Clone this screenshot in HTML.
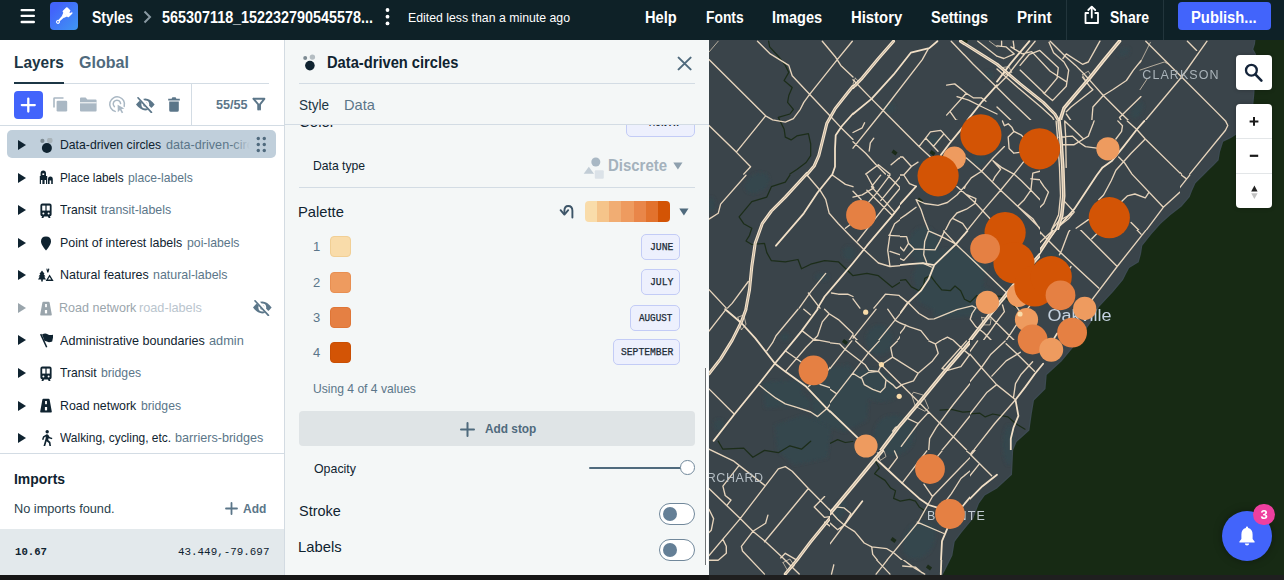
<!DOCTYPE html>
<html lang="en">
<head>
<meta charset="utf-8">
<title>Styles</title>
<style>
*{box-sizing:border-box;margin:0;padding:0}
html,body{width:1284px;height:580px;overflow:hidden;background:#161616}
body{font-family:"Liberation Sans",sans-serif;color:#0f2330;position:relative;-webkit-font-smoothing:antialiased}
.abs,.t{position:absolute;white-space:nowrap}
.t{line-height:1;transform-origin:0 50%}
.b{font-weight:700}
.mono{font-family:"Liberation Mono",monospace}
/* top bar */
#top{position:absolute;left:0;top:0;width:1284px;height:40.5px;background:#0e2127;color:#fff}
#top .t{color:#fff}
/* left panel */
#left{position:absolute;left:0;top:40px;width:284px;height:534.5px;background:#fff;overflow:hidden}
#mid{position:absolute;left:284px;top:40px;width:425px;height:534.5px;background:#f4f7f7;border-left:1px solid #d3dbe2;overflow:hidden}
#map{position:absolute;left:709px;top:40px;width:575px;height:540px;background:#3a444a;overflow:hidden}
.hl{position:absolute;height:1px;background:#d3dce4}
.vl{position:absolute;width:1px;background:#d3dce4}
.g{color:#5b7689}
.row .t{font-size:13px}
.tri{position:absolute;width:0;height:0;margin-top:-0.6px;border-left:8.8px solid #0f2330;border-top:5.3px solid transparent;border-bottom:5.3px solid transparent}
.chip{position:absolute;background:#edf0fd;border:1px solid #c3ccf6;border-radius:5px;height:26px}
.chip .t{font-size:10px;color:#1c2b36;top:8px;font-weight:400;-webkit-text-stroke:0.25px #1c2b36}
.sw{position:absolute;width:21px;height:21px;border-radius:4px}
.num{font-size:13px;color:#5b7689}
.tog{position:absolute;width:36px;height:22px;border:1px solid #71889b;border-radius:11px;background:#fff}
.tog i{position:absolute;left:3px;top:3px;width:14px;height:14px;border-radius:50%;background:#647f96}
</style>
</head>
<body>
<!-- ================= TOP BAR ================= -->
<div id="top">
  <svg class="abs" style="left:20.1px;top:8.8px" width="16" height="16" viewBox="0 0 16 16"><g fill="#fff"><rect x="0.5" y="0.1" width="14.5" height="2.2" rx="1.1"/><rect x="0.5" y="5.8" width="14.5" height="2.2" rx="1.1"/><rect x="0.5" y="11.7" width="14.5" height="2.6" rx="1.2"/></g></svg>
  <div class="abs" id="logo" style="left:50px;top:2px;width:28px;height:28px;border-radius:4px;background:linear-gradient(135deg,#4264fb 20%,#3f97f2 100%)">
    <svg width="28" height="28" viewBox="0 0 28 28"><g transform="translate(13.1 14.7) rotate(45)" fill="#fff"><rect x="-4.3" y="-9.6" width="8.6" height="6.6" rx="1"/><path d="M-2.9 -3.4 H2.9 L1.3 0.4 H-1.3 Z"/><path d="M-1.3 0 H1.3 L0.9 6 H-0.9 Z"/><circle cx="0" cy="7.2" r="2"/><circle cx="0" cy="7.3" r="0.85" fill="#4273f8"/><path d="M0.8 -9.8 L1.7 -7.2 L2.7 -8.2 L3 -9.8 Z" fill="#4169fa"/></g></svg>
  </div>
  <div class="t b" id="t-styles" style="left:92.00px;top:9.6px;font-size:16px;transform:scaleX(0.8726)">Styles</div>
  <svg class="abs" style="left:143px;top:10px" width="9" height="14" viewBox="0 0 9 14"><path d="M1.5 1.5 L7 7 L1.5 12.5" fill="none" stroke="#8a9aa3" stroke-width="2"/></svg>
  <div class="t b" id="t-name" style="left:162.00px;top:9.6px;font-size:16px;transform:scaleX(0.8979)">565307118_152232790545578...</div>
  <svg class="abs" style="left:384px;top:7px" width="7" height="20" viewBox="0 0 7 20"><g fill="#fff"><circle cx="3.5" cy="3" r="1.9"/><circle cx="3.5" cy="9.7" r="1.9"/><circle cx="3.5" cy="16.4" r="1.9"/></g></svg>
  <div class="t" id="t-edited" style="left:408.00px;top:10.6px;font-size:13px;transform:scaleX(0.9458)">Edited less than a minute ago</div>
  <div class="t b" id="t-help" style="left:645.00px;top:9.6px;font-size:16px;transform:scaleX(0.9147)">Help</div>
  <div class="t b" id="t-fonts" style="left:706.00px;top:9.6px;font-size:16px;transform:scaleX(0.8639)">Fonts</div>
  <div class="t b" id="t-images" style="left:772.00px;top:9.6px;font-size:16px;transform:scaleX(0.9091)">Images</div>
  <div class="t b" id="t-history" style="left:851.00px;top:9.6px;font-size:16px;transform:scaleX(0.9287)">History</div>
  <div class="t b" id="t-settings" style="left:931.00px;top:9.6px;font-size:16px;transform:scaleX(0.9048)">Settings</div>
  <div class="t b" id="t-print" style="left:1017.00px;top:9.6px;font-size:16px;transform:scaleX(0.9459)">Print</div>
  <div class="vl" style="left:1066px;top:0;height:40px;background:#22353c"></div>
  <svg class="abs" style="left:1083px;top:5px" width="18" height="20" viewBox="0 0 18 20"><g fill="none" stroke="#fff" stroke-width="1.8" stroke-linecap="round" stroke-linejoin="round"><path d="M5.2 8 H2.5 V18 H15 V8 H12.3"/><path d="M8.75 12.5 V2"/><path d="M5.3 5 L8.75 1.6 L12.2 5"/></g></svg>
  <div class="t b" id="t-share" style="left:1109.61px;top:9.6px;font-size:16px;transform:scaleX(0.8758)">Share</div>
  <div class="vl" style="left:1163px;top:0;height:40px;background:#22353c"></div>
  <div class="abs" style="left:1178px;top:2px;width:93px;height:28px;border-radius:4px;background:#4264fb"></div>
  <div class="t b" id="t-publish" style="left:1191.46px;top:9.6px;font-size:16px;transform:scaleX(0.9232)">Publish...</div>
</div>

<!-- ================= LEFT PANEL ================= -->
<div id="left">
  <div class="t b" id="t-layers" style="left:14.08px;top:14px;font-size:17px;color:#1c3645;transform:scaleX(0.9076)">Layers</div>
  <div class="t b" id="t-global" style="left:79.00px;top:14px;font-size:17px;color:#4f6a7d;transform:scaleX(0.9425)">Global</div>
  <div class="hl" style="left:14px;top:43px;width:255px"></div>
  <div class="hl" style="left:14px;top:42px;width:50px;height:2px;background:#1c3645"></div>
  <div class="abs" style="left:14px;top:51px;width:29px;height:28px;border-radius:4px;background:#4264fb"></div>

  <svg class="abs" style="left:14px;top:51px" width="29" height="28" viewBox="0 0 29 28"><path d="M14.3 7.6 V20.6 M7.8 14.1 H20.8" stroke="#fff" stroke-width="2.3" stroke-linecap="round"/></svg>
  <svg class="abs" style="left:52px;top:56px" width="17" height="17" viewBox="0 0 17 17"><path d="M2 11.5 V2.6 Q2 2 2.6 2 H11.5" fill="none" stroke="#aab8c4" stroke-width="1.6"/><rect x="4.6" y="4.8" width="10.6" height="10.6" rx="1.2" fill="#aab8c4"/></svg>
  <svg class="abs" style="left:79px;top:56px" width="19" height="17" viewBox="0 0 19 17"><path d="M1 2.6 Q1 1.6 2 1.6 H6.6 L8.4 3.6 H16.6 Q17.6 3.6 17.6 4.6 V14.4 Q17.6 15.4 16.6 15.4 H2 Q1 15.4 1 14.4 Z" fill="#aab8c4"/><rect x="1" y="6.3" width="16.6" height="1" fill="#fff"/></svg>
  <svg class="abs" style="left:108px;top:55px" width="20" height="20" viewBox="0 0 20 20"><g fill="none" stroke="#aab8c4" stroke-width="1.5" stroke-linecap="round"><path d="M7.2 16.4 A7.4 7.4 0 1 1 16.2 11.4"/><path d="M6.4 11.6 A3.7 3.7 0 1 1 12.6 8.6"/></g><path d="M9.6 9.8 L16.4 13.4 L13.4 14.2 L15.2 17.4 L13.8 18.2 L12 15 L9.8 17.2 Z" fill="#aab8c4"/></svg>
  <svg class="abs" style="left:135px;top:56px" width="21" height="17" viewBox="0 0 21 17"><path d="M1 8.6 Q5.5 2.6 10.4 2.6 Q15.3 2.6 19.6 8.6 Q15.3 14.4 10.4 14.4 Q5.5 14.4 1 8.6 Z" fill="#5b7689"/><circle cx="10.3" cy="8.5" r="3.9" fill="#fff"/><circle cx="10.3" cy="8.5" r="2.2" fill="#5b7689"/><path d="M3.6 0.6 L17.4 16" stroke="#fff" stroke-width="3.6"/><path d="M3 1.8 L16.4 16.4" stroke="#5b7689" stroke-width="1.7" stroke-linecap="round"/></svg>
  <svg class="abs" style="left:167px;top:56px" width="14" height="17" viewBox="0 0 14 17"><path d="M1.2 2.8 H4.6 L5.4 1.2 H8.6 L9.4 2.8 H12.8 V4.6 H1.2 Z M2.2 5.6 H11.8 V14.2 Q11.8 15.8 10.2 15.8 H3.8 Q2.2 15.8 2.2 14.2 Z" fill="#5b7689"/></svg>
  <svg class="abs" style="left:252px;top:57px" width="14" height="15" viewBox="0 0 14 15"><path d="M1.6 1.8 H12.4 L8 7.4 V12.6" fill="none" stroke="#5b7689" stroke-width="1.9" stroke-linejoin="round" stroke-linecap="round"/><path d="M1.6 1.8 L6.2 7.4 V12.6" fill="none" stroke="#5b7689" stroke-width="1.9" stroke-linejoin="round" stroke-linecap="round"/></svg>
  <div class="vl" style="left:191px;top:44px;height:42px"></div>
  <div class="t b g" id="t-5555" style="left:216.00px;top:58px;font-size:13px;transform:scaleX(0.9701)">55/55</div>
  <div class="hl" style="left:0;top:85px;width:284px"></div>
  <div class="abs" style="left:7px;top:90px;width:269px;height:28px;border-radius:5px;background:#c0cfdb"></div>
  <div class="tri" style="left:18px;top:100.7px;border-left-color:#0f2330"></div>
  <svg class="abs" style="left:39px;top:97.9px" width="14" height="15" viewBox="0 0 14 15"><circle cx="3.4" cy="2.9" r="2.1" fill="#7d8b93"/><circle cx="10.8" cy="2.4" r="2.8" fill="#a9b4ba"/><circle cx="7.9" cy="10" r="5" fill="#0f2330"/></svg>
  <div class="t" id="t-r0a" style="left:60.18px;top:98.2px;font-size:13.5px;color:#0f2330;transform:scaleX(0.9052)">Data-driven circles</div>
  <div class="abs" style="left:164px;top:92px;width:86px;height:24px;overflow:hidden"><div class="t" id="t-r0b" style="left:1.8px;top:6px;font-size:13.5px;color:#5b7689;transform:scaleX(0.935)">data-driven-circles</div></div>
  <div class="tri" style="left:18px;top:133.2px;border-left-color:#0f2330"></div>
  <svg class="abs" style="left:39px;top:130.4px" width="14" height="15" viewBox="0 0 14 15"><path d="M4.3 0.6 Q7 0.6 7 3.6 V6 H8.2 V14 H7 V10 H5.6 V14 H3.4 V10 H2 V14 H0.8 V6 H1.6 V3.6 Q1.6 0.6 4.3 0.6 Z M9 14 V9.4 Q9 6.6 11.4 6.6 Q13.8 6.6 13.8 9.4 V14 H12.2 V10.6 H10.6 V14 Z" fill="#0f2330"/><rect x="3.4" y="3.4" width="1.8" height="1.6" fill="#fff"/></svg>
  <div class="t" id="t-r1a" style="left:60.18px;top:130.7px;font-size:13.5px;color:#0f2330;transform:scaleX(0.8734)">Place labels</div>
  <div class="t" id="t-r1b" style="left:128.00px;top:130.7px;font-size:13.5px;color:#5b7689;transform:scaleX(0.9001)">place-labels</div>
  <div class="tri" style="left:18px;top:165.8px;border-left-color:#0f2330"></div>
  <svg class="abs" style="left:39px;top:163.0px" width="14" height="15" viewBox="0 0 14 15"><path d="M3.4 0.6 H10.6 Q12.6 0.6 12.6 2.6 V11.6 Q12.6 13.4 10.8 13.4 L11.6 15 H9.6 L9 13.6 H5 L4.4 15 H2.4 L3.2 13.4 Q1.4 13.4 1.4 11.6 V2.6 Q1.4 0.6 3.4 0.6 Z" fill="#0f2330"/><rect x="3.2" y="2.6" width="3.2" height="5" fill="#fff"/><rect x="7.6" y="2.6" width="3.2" height="5" fill="#fff"/><circle cx="4.4" cy="10.6" r="1" fill="#fff"/><circle cx="9.6" cy="10.6" r="1" fill="#fff"/></svg>
  <div class="t" id="t-r2a" style="left:60.19px;top:163.3px;font-size:13.5px;color:#0f2330;transform:scaleX(0.8960)">Transit</div>
  <div class="t" id="t-r2b" style="left:101.41px;top:163.3px;font-size:13.5px;color:#5b7689;transform:scaleX(0.9156)">transit-labels</div>
  <div class="tri" style="left:18px;top:198.3px;border-left-color:#0f2330"></div>
  <svg class="abs" style="left:39px;top:195.5px" width="14" height="15" viewBox="0 0 14 15"><path d="M7 0.6 Q12 0.6 12 5.6 Q12 9 7 14.6 Q2 9 2 5.6 Q2 0.6 7 0.6 Z" fill="#0f2330"/></svg>
  <div class="t" id="t-r3a" style="left:60.19px;top:195.9px;font-size:13.5px;color:#0f2330;transform:scaleX(0.9201)">Point of interest labels</div>
  <div class="t" id="t-r3b" style="left:187.18px;top:195.9px;font-size:13.5px;color:#5b7689;transform:scaleX(0.9087)">poi-labels</div>
  <div class="tri" style="left:18px;top:230.9px;border-left-color:#0f2330"></div>
  <svg class="abs" style="left:38px;top:228.1px" width="16" height="15" viewBox="0 0 16 15"><path d="M4 2.4 L6.6 6 H5.6 L7.4 8.6 H6.2 L8 11.4 H4.8 V13.6 H3.2 V11.4 H0 L1.8 8.6 H0.6 L2.4 6 H1.4 Z" fill="#0f2330"/><path d="M11.6 6.6 L15.6 13 H7.6 Z M11.6 9 L10 11.6 H13.2 Z" fill="#0f2330" fill-rule="evenodd"/><path d="M8.4 1 L9 0.2 L9.8 2 L10.6 0.2 L11.4 1 L10.4 4.6 H9.2 Z" fill="#0f2330"/></svg>
  <div class="t" id="t-r4a" style="left:60.18px;top:228.4px;font-size:13.5px;color:#0f2330;transform:scaleX(0.9241)">Natural features</div>
  <div class="t" id="t-r4b" style="left:153.41px;top:228.4px;font-size:13.5px;color:#5b7689;transform:scaleX(0.9192)">natural-labels</div>
  <div class="tri" style="left:18px;top:263.5px;border-left-color:#9aa5ac"></div>
  <svg class="abs" style="left:39px;top:260.7px" width="14" height="15" viewBox="0 0 14 15"><path d="M4.4 0.8 H9.6 Q10.4 0.8 10.6 1.6 L12.8 13.4 Q13 14.4 12 14.4 H2 Q1 14.4 1.2 13.4 L3.4 1.6 Q3.6 0.8 4.4 0.8 Z" fill="#9aa5ac"/><rect x="6.1" y="3" width="1.8" height="3.2" fill="#fff"/><rect x="5.9" y="9" width="2.2" height="3.4" fill="#fff"/></svg>
  <div class="t" id="t-r5a" style="left:59.24px;top:261.0px;font-size:13.5px;color:#9aa5ac;transform:scaleX(0.9285)">Road network</div>
  <div class="t" id="t-r5b" style="left:139.07px;top:261.0px;font-size:13.5px;color:#bac5ce;transform:scaleX(0.9413)">road-labels</div>
  <div class="tri" style="left:18px;top:296.0px;border-left-color:#0f2330"></div>
  <svg class="abs" style="left:39px;top:293.2px" width="14" height="15" viewBox="0 0 14 15"><path d="M1 1.4 L2.4 0.8 L8.4 14 L7 14.6 Z" fill="#0f2330"/><path d="M3 1.6 Q6 -0.4 8.6 1.2 Q11.2 2.8 14.6 1.4 L13.2 8.4 Q10 9.8 8 8.6 Q6.4 7.6 5.6 8 Z" fill="#0f2330"/></svg>
  <div class="t" id="t-r6a" style="left:60.19px;top:293.5px;font-size:13.5px;color:#0f2330;transform:scaleX(0.9318)">Administrative boundaries</div>
  <div class="t" id="t-r6b" style="left:208.81px;top:293.5px;font-size:13.5px;color:#5b7689;transform:scaleX(0.9452)">admin</div>
  <div class="tri" style="left:18px;top:328.5px;border-left-color:#0f2330"></div>
  <svg class="abs" style="left:39px;top:325.7px" width="14" height="15" viewBox="0 0 14 15"><path d="M3.4 0.6 H10.6 Q12.6 0.6 12.6 2.6 V11.6 Q12.6 13.4 10.8 13.4 L11.6 15 H9.6 L9 13.6 H5 L4.4 15 H2.4 L3.2 13.4 Q1.4 13.4 1.4 11.6 V2.6 Q1.4 0.6 3.4 0.6 Z" fill="#0f2330"/><rect x="3.2" y="2.6" width="3.2" height="5" fill="#fff"/><rect x="7.6" y="2.6" width="3.2" height="5" fill="#fff"/><circle cx="4.4" cy="10.6" r="1" fill="#fff"/><circle cx="9.6" cy="10.6" r="1" fill="#fff"/></svg>
  <div class="t" id="t-r7a" style="left:60.19px;top:326.0px;font-size:13.5px;color:#0f2330;transform:scaleX(0.8960)">Transit</div>
  <div class="t" id="t-r7b" style="left:100.83px;top:326.0px;font-size:13.5px;color:#5b7689;transform:scaleX(0.9039)">bridges</div>
  <div class="tri" style="left:18px;top:361.1px;border-left-color:#0f2330"></div>
  <svg class="abs" style="left:39px;top:358.3px" width="14" height="15" viewBox="0 0 14 15"><path d="M4.4 0.8 H9.6 Q10.4 0.8 10.6 1.6 L12.8 13.4 Q13 14.4 12 14.4 H2 Q1 14.4 1.2 13.4 L3.4 1.6 Q3.6 0.8 4.4 0.8 Z" fill="#0f2330"/><rect x="6.1" y="3" width="1.8" height="3.2" fill="#fff"/><rect x="5.9" y="9" width="2.2" height="3.4" fill="#fff"/></svg>
  <div class="t" id="t-r8a" style="left:60.18px;top:358.6px;font-size:13.5px;color:#0f2330;transform:scaleX(0.9151)">Road network</div>
  <div class="t" id="t-r8b" style="left:141.17px;top:358.6px;font-size:13.5px;color:#5b7689;transform:scaleX(0.9039)">bridges</div>
  <div class="tri" style="left:18px;top:393.6px;border-left-color:#0f2330"></div>
  <svg class="abs" style="left:39px;top:389.8px" width="14" height="17" viewBox="0 0 14 17"><circle cx="8.2" cy="1.8" r="1.7" fill="#0f2330"/><path d="M7.6 4.2 Q8.8 4 9.4 5 L10.6 7 L13.4 8 L12.9 9.3 L9.6 8.2 L9.2 10 L11.4 12 L12 16 H10.4 L9.9 12.9 L7.6 11.2 L6.2 16 H4.5 L6.6 8.6 L6.8 6.4 L5.2 7.4 L4.4 10 L3 9.6 L4 6.4 Z" fill="#0f2330"/></svg>
  <div class="t" id="t-r9a" style="left:60.18px;top:391.1px;font-size:13.5px;color:#0f2330;transform:scaleX(0.8851)">Walking, cycling, etc.</div>
  <div class="t" id="t-r9b" style="left:174.82px;top:391.1px;font-size:13.5px;color:#5b7689;transform:scaleX(0.9334)">barriers-bridges</div>
  <div class="abs" style="left:232px;top:91px;width:19px;height:26px;background:linear-gradient(90deg,rgba(192,207,219,0),#c0cfdb 95%)"></div>
  <svg class="abs" style="left:256px;top:96px" width="11" height="17" viewBox="0 0 11 17"><g fill="#4f6a7d"><circle cx="2.3" cy="2.5" r="1.7"/><circle cx="8.3" cy="2.5" r="1.7"/><circle cx="2.3" cy="8.5" r="1.7"/><circle cx="8.3" cy="8.5" r="1.7"/><circle cx="2.3" cy="14.5" r="1.7"/><circle cx="8.3" cy="14.5" r="1.7"/></g></svg>
  <svg class="abs" style="left:252px;top:259px" width="21" height="17" viewBox="0 0 21 17"><path d="M1 8.6 Q5.5 2.6 10.4 2.6 Q15.3 2.6 19.6 8.6 Q15.3 14.4 10.4 14.4 Q5.5 14.4 1 8.6 Z" fill="#5b7689"/><circle cx="10.3" cy="8.5" r="3.9" fill="#fff"/><circle cx="10.3" cy="8.5" r="2.2" fill="#5b7689"/><path d="M3.6 0.6 L17.4 16" stroke="#fff" stroke-width="3.6"/><path d="M3 1.8 L16.4 16.4" stroke="#5b7689" stroke-width="1.7" stroke-linecap="round"/></svg>
  <svg class="abs" style="left:225px;top:462px" width="13" height="13" viewBox="0 0 13 13"><path d="M6.5 1 V12 M1 6.5 H12" stroke="#5b7689" stroke-width="1.8" stroke-linecap="round"/></svg>
  <div class="hl" style="left:0;top:413px;width:284px"></div>
  <div class="t b" id="t-imports" style="left:14.00px;top:431.3px;font-size:15px;transform:scaleX(0.9275)">Imports</div>
  <div class="t" id="t-noimp" style="left:14.00px;top:462px;font-size:13px;color:#2a3f4d;transform:scaleX(0.9804)">No imports found.</div>
  <div class="t b g" id="t-add" style="left:243.00px;top:462px;font-size:13px;transform:scaleX(0.9210)">Add</div>
  <div class="abs" style="left:0;top:488.5px;width:284px;height:46px;background:#e3e9ec"></div>
  <div class="t b mono" id="t-zoom" style="left:15.00px;top:507.3px;font-size:11px;transform:scaleX(0.9701)">10.67</div>
  <div class="t mono" id="t-coord" style="left:178.00px;top:507.3px;font-size:11px;transform:scaleX(0.9891)">43.449,-79.697</div>
</div>

<!-- ================= MID PANEL ================= -->
<div id="mid">
  <div class="t b" id="t-title" style="left:42.00px;top:14.8px;font-size:16px;transform:scaleX(0.9175)">Data-driven circles</div>
  <div class="hl" style="left:14px;top:43px;width:396px"></div>
  <div class="t" id="t-style" style="left:14.21px;top:57px;font-size:15px;color:#1c3645;transform:scaleX(0.9035)">Style</div>
  <div class="t g" id="t-data" style="left:59.03px;top:57px;font-size:15px;transform:scaleX(0.9745)">Data</div>
  <div class="hl" style="left:0;top:84px;width:425px"></div>
  <svg class="abs" style="left:16.5px;top:14px" width="16" height="17" viewBox="0 0 16 17"><circle cx="3.2" cy="4" r="2" fill="#7d8b93"/><circle cx="10.4" cy="3.1" r="2.7" fill="#b4bdc2"/><circle cx="7.9" cy="11.6" r="4.8" fill="#0f2330"/></svg>
  <svg class="abs" style="left:391.5px;top:15.5px" width="15" height="15" viewBox="0 0 15 15"><path d="M1.6 1.6 L13.6 13.4 M13.6 1.6 L1.6 13.4" stroke="#4f6a7d" stroke-width="2" stroke-linecap="round"/></svg>
  <!-- clipped scroll content -->
  <div class="abs" style="left:0;top:85px;width:425px;height:448px;overflow:hidden">
    <div class="t" id="t-color" style="left:14px;top:-11px;font-size:15px;color:#0f2330">Color</div>
    <div class="chip" style="left:340.6px;top:-15px;width:69px;height:27px"></div>
    <div class="t mono b" id="t-month" style="left:364px;top:-6px;font-size:10px;color:#1c2b36">MONTH</div>
    <div class="t" id="t-dtype" style="left:28.01px;top:34.0px;font-size:13px;transform:scaleX(0.9358)">Data type</div>
    <svg class="abs" style="left:298px;top:32px" width="22" height="22" viewBox="0 0 22 22"><circle cx="12.8" cy="5" r="4.5" fill="#a9b8c4"/><path d="M5.8 9.8 L11 16.8 H0.7 Z" fill="#c2cdd6"/><rect x="11.8" y="13.3" width="9" height="8.4" rx="1" fill="#dbe2e8"/></svg>
    <div class="t b" id="t-discrete" style="left:322.53px;top:32.5px;font-size:16px;color:#a4b2bd;transform:scaleX(0.9355)">Discrete</div>
    <svg class="abs" style="left:387.5px;top:37px" width="10" height="8" viewBox="0 0 10 8"><path d="M0.3 0.4 H9.5 L4.9 7.6 Z" fill="#8ea0ae"/></svg>
    <div class="hl" style="left:14px;top:61.5px;width:396px"></div>
    <div class="t" id="t-palette" style="left:13.22px;top:78.5px;font-size:15px;color:#0f2330;transform:scaleX(0.9828)">Palette</div>
    <svg class="abs" style="left:273.5px;top:79px" width="16" height="15" viewBox="0 0 16 15"><path d="M13.4 13.6 V6.8 Q13.4 2 9.2 2 Q5.4 2 5.4 6.8 V9.6" fill="none" stroke="#3d5568" stroke-width="1.9" stroke-linecap="round"/><path d="M1.6 6.2 L5.4 10.6 L9.2 6.2" fill="none" stroke="#3d5568" stroke-width="1.9" stroke-linecap="round" stroke-linejoin="round"/></svg>
    <div class="abs" style="left:300px;top:76px;width:85px;height:21px;border-radius:4px;overflow:hidden;background:linear-gradient(90deg,#f9dcaa 0 14.3%,#f5c48a 14.3% 28.6%,#f1ad73 28.6% 42.9%,#ee9b5f 42.9% 57.1%,#e98649 57.1% 71.4%,#e2722d 71.4% 85.7%,#d35405 85.7% 100%)"></div>
    <svg class="abs" style="left:394px;top:83.30000000000001px" width="10" height="8" viewBox="0 0 10 8"><path d="M0.3 0.4 H9.5 L4.9 7.6 Z" fill="#4f6a7d"/></svg>
    <div class="t num" id="t-n1" style="left:28px;top:115.0px">1</div>
    <div class="sw" style="left:44.5px;top:111.0px;background:#f9dcaa;border:1px solid #f1cf95"></div>
    <div class="chip" style="left:356.3px;top:108.5px;width:38.9px"><div class="t mono" id="t-c1" style="left:7.39px;transform:scaleX(0.9760)">JUNE</div></div>
    <div class="t num" id="t-n2" style="left:28px;top:150.8px">2</div>
    <div class="sw" style="left:44.5px;top:146.8px;background:#ee9b5f;border:1px solid #e88f52"></div>
    <div class="chip" style="left:356.3px;top:144.3px;width:38.9px"><div class="t mono" id="t-c2" style="left:7.36px;transform:scaleX(0.9778)">JULY</div></div>
    <div class="t num" id="t-n3" style="left:28px;top:186.10000000000002px">3</div>
    <div class="sw" style="left:44.5px;top:182.10000000000002px;background:#e58043;border:1px solid #df7637"></div>
    <div class="chip" style="left:345px;top:179.60000000000002px;width:50.2px"><div class="t mono" id="t-c3" style="left:7.53px;transform:scaleX(0.9253)">AUGUST</div></div>
    <div class="t num" id="t-n4" style="left:28px;top:220.5px">4</div>
    <div class="sw" style="left:44.5px;top:216.5px;background:#d35405;border:1px solid #c94f04"></div>
    <div class="chip" style="left:327.5px;top:214px;width:67.7px"><div class="t mono" id="t-c4" style="left:7.57px;transform:scaleX(0.9676)">SEPTEMBER</div></div>
    <div class="t g" id="t-using" style="left:28.07px;top:256.5px;font-size:13px;transform:scaleX(0.9309)">Using 4 of 4 values</div>
    <div class="abs" style="left:13.5px;top:286px;width:396.5px;height:35px;border-radius:4px;background:#dfe4e6"></div>
    <svg class="abs" style="left:174.5px;top:296.5px" width="15" height="15" viewBox="0 0 15 15"><path d="M7.5 1 V14 M1 7.5 H14" stroke="#4f6a7d" stroke-width="2" stroke-linecap="round"/></svg>
    <div class="t b" id="t-addstop" style="left:200.00px;top:297px;font-size:13px;color:#4f6a7d;transform:scaleX(0.9107)">Add stop</div>
    <div class="t" id="t-opacity" style="left:29.47px;top:336.5px;font-size:13px;transform:scaleX(0.9513)">Opacity</div>
    <div class="abs" style="left:303.7px;top:341.6px;width:92px;height:2px;background:#4f6a7d;border-radius:1px"></div>
    <div class="abs" style="left:395.2px;top:335.4px;width:14.6px;height:14.6px;border-radius:50%;background:#fff;border:1px solid #71889b"></div>
    <div class="t" id="t-stroke" style="left:13.60px;top:378px;font-size:15px;color:#0f2330;transform:scaleX(0.9629)">Stroke</div>
    <div class="tog" style="left:374px;top:378px"><i></i></div>
    <div class="t" id="t-labels" style="left:12.62px;top:413.5px;font-size:15px;color:#0f2330;transform:scaleX(0.9860)">Labels</div>
    <div class="tog" style="left:374px;top:413.5px"><i></i></div>
  </div>
  <div class="abs" style="left:420px;top:327.5px;width:1.3px;height:197px;background:#6f7375"></div><div class="abs" style="left:421.3px;top:327.5px;width:1.5px;height:197px;background:#fff"></div>
</div>

<!-- ================= MAP ================= -->
<div id="map">
<!--MAPSVG-->
<svg class="abs" style="left:0;top:0" width="575" height="535" viewBox="0 0 575 535">
<filter id="bl" x="-20%" y="-20%" width="140%" height="140%"><feGaussianBlur stdDeviation="1.6"/></filter><g fill="#34464e" filter="url(#bl)"><ellipse cx="48" cy="143" rx="13.0" ry="9.0" transform="rotate(-30 48 143)"/><ellipse cx="2" cy="165" rx="4.0" ry="8.0" transform="rotate(0 2 165)"/><ellipse cx="140" cy="213" rx="6.0" ry="7.0" transform="rotate(0 140 213)"/><ellipse cx="10" cy="385" rx="5.0" ry="6.0" transform="rotate(0 10 385)"/><ellipse cx="76" cy="297" rx="5.0" ry="4.0" transform="rotate(0 76 297)"/><ellipse cx="90" cy="360" rx="13.0" ry="7.0" transform="rotate(30 90 360)"/><ellipse cx="135" cy="335" rx="7.0" ry="11.0" transform="rotate(30 135 335)"/><ellipse cx="88" cy="395" rx="5.0" ry="7.0" transform="rotate(30 88 395)"/><ellipse cx="180" cy="68" rx="6.0" ry="5.0" transform="rotate(0 180 68)"/><ellipse cx="225" cy="100" rx="6.0" ry="5.0" transform="rotate(0 225 100)"/><ellipse cx="270" cy="120" rx="7.0" ry="6.0" transform="rotate(0 270 120)"/><ellipse cx="215" cy="205" rx="15.0" ry="18.0" transform="rotate(0 215 205)"/><ellipse cx="255" cy="260" rx="30.0" ry="13.0" transform="rotate(-10 255 260)"/><ellipse cx="170" cy="300" rx="13.0" ry="15.0" transform="rotate(0 170 300)"/><ellipse cx="165" cy="345" rx="25.0" ry="15.0" transform="rotate(20 165 345)"/><ellipse cx="185" cy="395" rx="20.0" ry="20.0" transform="rotate(0 185 395)"/><ellipse cx="210" cy="500" rx="15.0" ry="20.0" transform="rotate(30 210 500)"/><ellipse cx="280" cy="35" rx="5.0" ry="4.0" transform="rotate(0 280 35)"/><ellipse cx="415" cy="12" rx="6.0" ry="4.0" transform="rotate(-30 415 12)"/><ellipse cx="428" cy="70" rx="5.0" ry="9.0" transform="rotate(30 428 70)"/><ellipse cx="345" cy="215" rx="10.0" ry="3.0" transform="rotate(10 345 215)"/><ellipse cx="300" cy="405" rx="6.0" ry="20.0" transform="rotate(0 300 405)"/><ellipse cx="113" cy="237" rx="7.0" ry="4.0" transform="rotate(0 113 237)"/><ellipse cx="130" cy="470" rx="6.0" ry="10.0" transform="rotate(30 130 470)"/><polygon points="100,335 130,325 160,345 158,380 135,392 105,380"/><polygon points="66,385 95,375 122,388 118,418 85,425 68,410"/><polygon points="54,342 92,340 94,366 56,368"/><polygon points="223,258 266,256 268,276 225,277"/><polygon points="213,212 250,208 278,225 270,268 235,275 210,262 204,235"/></g><polygon points="546.6,-2.0 546.0,4.0 544.3,9.2 547.0,14.0 545.4,53.2 544.3,64.7 537.0,80.0 530.4,92.5 522.0,98.0 514.2,101.7 511.0,112.0 509.6,120.2 505.0,125.0 500.3,129.4 494.6,135.2 486.5,143.2 483.0,151.0 480.7,157.1 472.6,166.4 461.0,175.6 451.8,183.7 442.6,194.1 433.3,205.7 432.0,214.0 429.7,222.3 420.2,228.0 417.0,234.0 414.0,240.0 404.0,252.0 390.0,267.0 381.5,283.0 364.3,307.3 352.7,321.2 337.7,335.0 336.5,348.9 325.0,360.5 322.7,374.3 320.4,390.5 307.6,402.0 304.2,410.0 303.0,434.7 288.0,448.5 275.8,455.5 270.0,463.6 264.2,478.6 252.6,492.5 245.7,501.7 243.4,515.6 236.5,529.5 233.0,536.0 580.0,536.0 580.0,-2.0" fill="#3d4a52" stroke="#3d4a52" stroke-width="2.5" stroke-linejoin="round"/><polygon points="546.6,-2.0 546.0,4.0 544.3,9.2 547.0,14.0 545.4,53.2 544.3,64.7 537.0,80.0 530.4,92.5 522.0,98.0 514.2,101.7 511.0,112.0 509.6,120.2 505.0,125.0 500.3,129.4 494.6,135.2 486.5,143.2 483.0,151.0 480.7,157.1 472.6,166.4 461.0,175.6 451.8,183.7 442.6,194.1 433.3,205.7 432.0,214.0 429.7,222.3 420.2,228.0 417.0,234.0 414.0,240.0 404.0,252.0 390.0,267.0 381.5,283.0 364.3,307.3 352.7,321.2 337.7,335.0 336.5,348.9 325.0,360.5 322.7,374.3 320.4,390.5 307.6,402.0 304.2,410.0 303.0,434.7 288.0,448.5 275.8,455.5 270.0,463.6 264.2,478.6 252.6,492.5 245.7,501.7 243.4,515.6 236.5,529.5 233.0,536.0 580.0,536.0 580.0,-2.0" fill="#172a14"/><g fill="#1b2b19"><rect x="183.0" y="110.7" width="5" height="3.6" transform="rotate(35 185.5 112.5)"/><rect x="221.0" y="111.2" width="5" height="3.6" transform="rotate(35 223.5 113)"/><rect x="208.5" y="158.7" width="5" height="3.6" transform="rotate(35 211 160.5)"/><rect x="182.0" y="498.2" width="5" height="3.6" transform="rotate(35 184.5 500)"/><rect x="133.5" y="300.2" width="5" height="3.6" transform="rotate(35 136 302)"/><rect x="217.5" y="525.7" width="5" height="3.6" transform="rotate(35 220 527.5)"/><rect x="253.5" y="-0.8" width="5" height="3.6" transform="rotate(35 256 1)"/></g>
<clipPath id="cb"><path d="M-5 -5 H580 V540 H-5 Z M191.0 80.0 H331.0 V190.1 H191.0 Z M331.0 80.0 H471.0 V190.1 H331.0 Z M191.0 190.0 H331.0 V300.1 H191.0 Z M121.0 300.0 H261.0 V410.1 H121.0 Z M261.0 300.0 H401.0 V410.1 H261.0 Z M121.0 410.0 H261.0 V520.1 H121.0 Z" clip-rule="evenodd"/></clipPath>
<g clip-path="url(#cb)">
<path d="M59.6 1.2 L60.6 6.9 L69.3 16.2 L76.3 25.4 L79.8 32.4 L75.1 40.5 L83.2 47.4 L79.8 55.5 L78.6 62.4 L84.4 69.3 L80.9 74.0 L69.3 77.4 L75.1 89.0 L76.3 97.1 L82.1 99.9 L87.8 95.9 L99.4 93.6 L101.7 104.0 L101.7 115.6 L97.1 122.5 L87.8 129.4 L80.9 134.1 M80.9 135.2 L76.3 142.1 L62.4 146.7 L57.8 157.1 L42.8 161.7 L30.1 176.8 L34.7 183.7 L42.8 188.3 L40.5 195.3 L37.0 201.0 L42.8 204.5 L55.5 203.3 L57.8 212.6 L62.4 220.7 L76.3 221.8 L89.0 219.5 L92.5 228.8 L101.7 224.2 L115.6 220.7 L129.4 221.8 L144.0 235.7 M144.0 235.7 L157.9 233.4 L169.4 235.7 L183.3 247.3 L192.5 241.5 L204.1 247.3 L213.3 240.3 L222.6 235.7 L229.5 247.3 L241.1 245.0 L252.6 249.6 L259.6 262.3 L273.4 254.2 M231.8 369.7 L245.7 370.9 L259.6 373.2 L273.4 375.5 L288.0 374.3 M288.0 373.2 L294.9 376.6 L301.9 383.6 L308.8 385.9 L318.1 390.5 M9.2 401.2 L13.9 409.2 L34.7 408.1 L43.9 417.3 L55.5 410.4 L69.3 412.7 L80.9 405.8 L92.5 409.2 L101.7 401.2 M164.8 420.8 L167.1 430.1 L178.7 441.6 L185.6 453.2 L187.9 460.1 L201.8 462.4 L208.7 461.3 L213.3 468.2" fill="none" stroke="#1c2d19" stroke-width="1.25" stroke-opacity="1" stroke-linejoin="round" stroke-linecap="round"/>
<path d="M0.0 12.0 L9.2 1.2 M146.3 38.1 L149.8 41.6 L147.5 46.2 L144.0 43.9 L146.3 38.1 M280.4 1.2 L288.0 6.9 M373.5 34.7 L379.3 31.2 L382.8 37.0 L378.2 42.8 L373.5 34.7 M292.6 27.7 L299.6 26.6 L303.0 32.4 L296.1 34.7 L292.6 27.7 M431.0 23.1 L435.6 13.9 L441.4 2.3 M431.0 30.1 L444.9 25.4 L455.3 22.0 L459.9 24.3 M431.0 49.7 L437.9 39.3 M431.0 153.6 L436.8 157.1 L440.2 152.5 M28.9 277.2 L34.7 274.9 L37.0 284.2 L32.4 290.0 L28.9 277.2 M204.1 357.0 L201.8 353.5 L206.4 352.4 L218.0 365.1 L213.3 370.9 L206.4 366.2 L204.1 357.0 M120.2 469.3 L126.0 465.9 L129.4 471.7 L124.8 476.3 L120.2 469.3 M74.0 522.5 L80.9 519.0 L85.5 526.0 L78.6 530.6 L74.0 522.5 M169.4 409.2 L176.4 406.9 L178.7 413.9 L172.9 418.5 L169.4 409.2" fill="none" stroke="#e6d5bd" stroke-width="0.9" stroke-opacity="0.8" stroke-linejoin="round" stroke-linecap="round"/>
<path d="M0.0 19.6 L56.6 75.8 L63.6 79.8 L76.3 82.1 L84.4 78.6 L91.3 69.3 L94.8 62.4 L100.6 54.3 L128.3 19.6 L143.3 1.2 M56.6 75.8 L27.3 112.1 M0.0 85.5 L27.3 112.1 L41.6 126.7 L34.7 134.1 M48.5 1.2 L61.3 13.9 L79.8 25.4 L83.2 35.8 L100.6 54.3 L121.4 76.3 L131.8 87.4 L144.0 99.4 M113.3 1.2 L126.7 17.3 L131.8 25.4 L144.0 37.0 M144.0 39.8 L162.5 58.9 L174.1 70.5 L211.0 107.5 L236.5 134.1 M219.1 9.2 L213.3 19.6 L174.1 70.5 L144.0 108.2 M242.2 1.2 L264.2 24.3 L288.0 47.4 M268.8 1.2 L288.0 16.2 M237.6 45.1 L245.7 43.9 L257.3 53.2 L264.2 57.8 L272.3 57.8 L276.9 61.3 M257.3 53.2 L237.6 75.1 M248.0 56.6 L259.6 60.1 L273.4 67.0 L288.0 74.0 M241.1 71.7 L246.9 79.8 L252.6 82.1 M144.0 101.7 L156.7 113.3 L167.1 124.8 L176.4 134.1 M160.2 111.0 L161.3 102.9 L164.8 98.2 M144.0 92.5 L153.2 87.8 L155.6 82.8 M156.7 134.1 L169.4 124.8 L181.0 134.1 M182.1 124.8 L190.2 117.9 L194.9 121.4 L201.8 134.1 M288.0 28.9 L308.8 47.4 L331.9 67.0 L343.5 77.4 L348.6 87.8 L349.3 134.1 M326.1 1.2 L310.0 20.8 L297.2 37.0 L288.0 46.2 M288.0 47.4 L301.9 61.3 L322.7 80.9 L344.6 93.6 M288.0 67.0 L311.1 89.0 L318.1 92.5 M341.2 1.2 L357.3 17.3 L366.6 25.4 L375.8 34.7 L385.1 45.1 L394.3 55.5 L412.8 74.0 L432.0 92.5 M390.9 1.2 L385.1 11.6 L379.3 22.0 L373.5 24.3 L357.3 13.9 L353.9 18.5 M432.0 20.8 L424.4 30.1 L417.4 40.5 L403.6 49.7 L394.3 55.5 L383.9 67.0 L382.8 80.9 L375.8 97.1 L373.5 101.7 M432.0 56.6 L410.5 77.4 L415.1 85.5 L414.0 91.3 L403.6 104.0 M357.3 71.7 L362.0 67.0 L383.9 49.7 L380.5 46.2 L373.5 37.0 M357.3 74.0 L373.5 97.1 L364.3 104.0 L355.0 105.2 M355.0 97.1 L364.3 95.9 L373.5 101.7 L375.8 106.3 L387.4 107.5 M432.0 89.0 L412.8 111.0 L394.3 134.1 M432.0 99.4 L417.4 117.9 L404.7 134.1 M311.1 25.4 L320.4 14.3 L330.8 10.4 L349.3 27.7 L348.1 38.1 L335.4 53.2 L311.1 30.1 M322.7 11.6 L341.2 31.2 L357.3 41.6 M340.0 2.3 L344.6 12.7 L355.0 22.0 L359.7 30.1 L357.3 46.2 L343.5 60.6 L334.2 52.7 M301.9 6.9 L313.4 13.9 L322.7 11.6 M288.0 5.8 L297.2 6.9 L305.3 13.9 L294.9 18.5 L288.0 16.2 M304.2 1.2 L305.3 9.2 M292.6 1.2 L292.6 5.8 M345.8 92.5 L337.7 101.7 M436.8 1.2 L472.6 37.0 L516.5 80.9 L518.8 85.5 L516.5 90.2 L480.7 134.1 M498.0 1.2 L472.6 37.0 L431.0 86.7 M478.4 1.2 L487.6 10.4 M431.0 92.5 L437.9 97.1 L431.0 104.0 M431.0 91.3 L472.6 134.1 M37.0 135.2 L11.6 164.1 L9.2 173.3 L0.0 179.1 M98.2 135.2 L111.0 150.2 L116.7 159.4 L120.2 173.3 L129.4 183.7 L144.0 198.7 M123.7 135.2 L136.4 144.4 L144.0 146.7 M144.0 182.5 L136.4 188.3 M116.7 233.4 L101.7 251.9 L90.2 268.1 M99.4 253.0 L111.0 268.1 M122.5 253.0 L129.4 254.2 L138.7 254.2 L144.0 256.5 M0.0 249.6 L17.3 268.1 M39.3 241.5 L23.1 263.4 L18.5 268.1 M201.8 135.2 L174.1 168.7 L148.6 201.0 M181.0 135.2 L167.1 153.6 L157.9 164.1 L150.9 161.7 M192.5 135.2 L171.7 160.6 M144.0 198.7 L155.6 210.3 L169.4 223.0 L181.0 226.5 L194.9 225.3 L213.3 223.0 L223.8 225.3 M288.0 147.9 L280.4 157.1 L245.7 203.3 L224.9 224.2 L215.7 238.0 L204.1 258.8 L199.5 268.1 M248.0 145.6 L259.6 157.1 L268.8 167.5 L282.7 180.2 L288.0 184.9 M144.0 157.1 L153.2 154.8 L164.8 147.9 L157.9 135.2 M178.7 135.2 L199.5 156.0 L211.0 168.7 L213.3 180.2 L218.0 189.5 L231.8 196.4 L245.7 203.3 L288.0 242.6 M211.0 168.7 L236.5 164.1 L252.6 154.8 L264.2 147.9 L273.4 135.2 M181.0 226.5 L178.7 210.3 L181.0 194.1 L185.6 183.7 L199.5 173.3 L211.0 168.7 M179.8 195.3 L197.2 196.4 L199.5 203.3 L191.4 214.9 L181.0 211.4 M199.5 203.3 L204.1 210.3 L224.9 211.4 L231.8 201.0 L238.8 182.5 L245.7 175.6 L264.2 164.1 M218.0 191.8 L215.7 210.3 L216.8 223.0 M243.4 179.1 L257.3 188.3 M191.4 214.9 L196.0 221.8 L194.9 225.3 M157.9 150.2 L183.3 175.6 M171.7 135.2 L162.5 146.7 L174.1 159.4 L185.6 172.1 M255.0 135.2 L273.4 154.8 L288.0 171.0 M264.2 135.2 L288.0 159.4 M144.0 258.8 L150.9 268.1 M164.8 268.1 L176.4 254.2 L190.2 255.4 L201.8 266.9 M259.6 268.1 L266.5 265.8 M144.0 151.3 L152.1 159.4 M349.3 135.2 L350.4 161.7 L344.6 180.2 L342.3 191.8 M403.6 135.2 L399.0 147.9 L385.1 161.7 L368.9 177.9 L359.7 191.8 L352.7 210.3 L350.4 214.9 M288.0 146.7 L311.1 171.0 L334.2 195.3 L350.4 211.4 L368.9 228.8 L389.7 248.0 M368.9 187.2 L389.7 208.0 L408.2 226.5 M432.0 196.4 L408.2 226.5 L382.8 260.0 M382.8 198.7 L389.7 191.8 M414.0 161.7 L417.4 154.8 L432.0 156.0 M420.9 182.5 L432.0 194.1 M432.0 143.2 L424.4 135.2 M303.0 135.2 L288.0 152.5 M322.7 135.2 L318.1 151.3 L308.8 164.1 M322.7 138.6 L331.9 139.8 L338.9 152.5 L331.9 164.1 L325.0 181.4 M318.1 151.3 L333.1 162.9 M343.5 182.5 L342.3 191.8 L325.0 208.0 L322.7 203.3 L331.9 192.9 M364.3 168.7 L362.0 174.5 L343.5 183.7 M362.0 226.5 L357.3 233.4 M288.0 242.6 L294.9 254.2 L301.9 247.3 M288.0 256.5 L297.2 268.1 M294.9 139.8 L313.4 159.4 L304.2 171.0 M480.7 135.2 L454.1 168.7 L431.0 197.6 M431.0 142.1 L454.1 168.7 M472.6 135.2 L477.2 138.6 M0.0 291.1 L16.2 270.3 M0.0 348.9 L25.4 374.3 M89.0 269.2 L67.0 295.7 L63.6 302.7 L57.8 310.8 M120.2 273.8 L113.3 281.9 L108.6 295.7 L97.1 307.3 L76.3 331.6 M144.0 294.6 L129.4 316.5 L117.9 331.6 L99.4 346.6 M144.0 333.9 L117.9 368.6 L108.6 376.6 L101.7 372.0 L87.8 367.4 L76.3 363.9 L67.0 358.2 L57.8 351.2 L50.9 345.4 M93.6 291.1 L104.0 299.2 L122.5 302.7 L136.4 308.5 L144.0 311.9 M76.3 310.8 L92.5 322.3 M111.0 344.3 L124.8 348.9 L128.3 352.4 M94.8 269.2 L101.7 274.9 M115.6 269.2 L120.2 273.8 L129.4 279.6 L144.0 293.4 M275.8 272.6 L255.0 298.1 L236.5 323.5 M144.0 295.7 L171.7 324.6 L190.2 344.3 L204.1 357.0 L211.0 360.5 L220.3 372.0 L241.1 395.1 L246.9 402.1 M194.9 269.2 L185.6 280.7 L160.2 311.9 L144.0 331.6 M167.1 269.2 L144.0 298.1 M178.7 269.2 L186.8 280.7 L197.2 286.5 L213.3 291.1 L222.6 302.7 L227.2 303.8 L236.5 298.1 L243.4 298.1 L252.6 307.3 L271.1 326.9 L288.0 344.3 M259.6 269.2 L264.2 281.9 L270.0 286.5 M197.2 286.5 L190.2 298.1 L182.1 308.5 L183.3 316.5 L208.7 332.7 L220.3 323.5 L228.4 314.2 L227.2 303.8 M208.7 332.7 L206.4 338.5 L193.7 343.1 L186.8 348.9 L179.8 342.0 M171.7 324.6 L182.1 317.7 M153.2 337.3 L157.9 332.7 L169.4 332.7 L176.4 342.0 L174.1 350.1 L167.1 352.4 L155.6 345.4 L153.2 337.3 M144.0 323.5 L156.7 325.8 L159.0 331.6 M288.0 313.1 L273.4 325.8 L252.6 351.2 L222.6 392.8 L220.3 402.1 M288.0 337.3 L261.9 369.7 L236.5 402.1 M288.0 357.0 L255.0 402.1 M280.4 280.7 L288.0 286.5 M233.0 331.6 L239.9 330.0 L249.2 328.6 L255.0 321.2 M201.8 379.0 L208.7 383.6 M184.5 392.8 L190.2 385.9 M204.1 269.2 L211.0 276.1 L224.9 278.4 L241.1 272.6 L250.3 269.2 M288.0 287.6 L299.6 298.1 L311.1 311.9 L325.0 330.4 M288.0 306.1 L299.6 298.1 L308.8 284.2 M288.0 330.4 L308.8 313.1 L311.1 311.9 M288.0 342.0 L307.6 359.3 L288.0 381.3 M325.0 323.5 L306.5 342.0 L305.3 359.3 M288.0 272.6 L292.6 279.6 L288.0 287.6 M0.0 448.5 L31.2 478.6 L43.9 491.3 L56.6 501.7 L74.0 517.9 L85.5 529.4 L90.2 534.1 M0.0 409.2 L24.3 420.8 L30.1 425.4 L55.5 445.1 M30.1 425.4 L13.9 446.2 L16.2 455.5 L22.0 460.1 L18.5 464.7 M31.2 478.6 L69.3 428.9 L76.3 426.6 L83.2 431.2 L99.4 448.5 L122.5 471.7 M99.4 448.5 L55.5 501.7 M32.4 506.3 L43.9 491.3 L56.6 483.2 L58.9 475.1 M32.4 506.3 L33.5 511.0 L55.5 534.1 M31.2 478.6 L0.0 515.6 M0.0 469.3 L4.6 478.6 L2.3 490.2 L0.0 492.5 M0.0 520.2 L9.2 520.2 L17.3 513.3 L17.3 506.3 L13.9 499.4 M115.6 456.6 L105.2 467.0 L115.6 477.4 L122.5 476.3 M129.4 474.0 L136.4 468.2 L144.0 476.3 M115.6 482.1 L124.8 489.0 L134.1 480.9 L144.0 490.2 M71.7 517.9 L76.3 513.3 L87.8 520.2 M122.5 534.1 L124.8 524.8 M252.6 401.2 L220.3 446.2 L222.6 455.5 L208.7 480.9 L184.5 512.1 L167.1 534.1 M271.1 401.2 L245.7 434.7 L222.6 464.7 L206.4 483.2 M220.3 401.2 L218.0 411.6 L193.7 442.8 M241.1 401.2 L233.0 411.6 M245.7 401.2 L261.9 415.0 L282.7 435.8 M261.9 415.0 L273.4 401.2 M270.0 424.3 L252.6 446.2 L241.1 460.1 M187.9 401.2 L186.8 413.9 L179.8 427.7 M197.2 401.2 L189.1 411.6 M215.7 445.1 L223.8 456.6 M207.6 482.1 L235.3 493.6 M144.0 491.3 L150.9 499.4 L162.5 507.5 L184.5 512.1 L194.9 520.2 L204.1 527.1 L215.7 534.1 M162.5 507.5 L163.6 515.6 L181.0 534.1 M193.7 526.0 L206.4 527.1 L213.3 532.9" fill="none" stroke="#e6d4bc" stroke-width="1.35" stroke-opacity="1" stroke-linejoin="round" stroke-linecap="round"/>
<path d="M144.0 73.5 L132.9 86.0 L126.7 95.2 L126.0 108.6 L126.0 126.7 L123.0 135.2 M228.4 1.2 L220.3 8.1 L201.8 12.7 L184.5 34.7 L162.5 58.9 L144.0 74.0 M288.0 45.1 L273.4 61.3 L259.6 78.6 L236.5 108.6 L229.5 115.6 L215.7 134.1 M320.4 1.2 L301.9 23.1 L288.0 41.6 M122.5 135.2 L108.6 152.5 L94.8 173.3 L67.0 205.7 M144.0 223.0 L129.4 240.3 L115.6 256.5 L108.6 268.1 M209.9 142.1 L183.3 175.6 L157.9 205.7 L144.0 223.0 M389.7 135.2 L382.8 147.9 L364.3 168.7 L352.7 182.5 L343.5 194.1 L322.7 219.5 M16.2 269.2 L32.4 283.0 L46.2 298.1 L65.9 323.5 L76.3 331.6 L97.1 346.6 L117.9 368.6 L144.0 394.0 M108.6 269.2 L92.5 291.1 L65.9 323.5 L49.7 344.3 L25.4 374.3 L4.6 400.9 M348.1 293.4 L334.2 316.5 L318.1 339.7 L307.6 359.3 L308.8 374.3 L305.3 390.5 L304.2 402.1 M167.1 416.2 L178.7 427.7 L194.9 443.9 L213.3 460.1 L222.6 464.7 L229.5 467.0 M288.0 434.7 L273.4 446.2 L255.0 464.7 L236.5 491.3 L233.0 501.7 L231.8 534.1 M144.0 474.0 L153.2 462.4" fill="none" stroke="#f1dfc6" stroke-width="1.8" stroke-opacity="1" stroke-linejoin="round" stroke-linecap="round"/>
<path d="M144.0 46.2 L138.7 52.7 L126.0 68.9 L117.9 83.2 L114.4 97.1 L109.8 115.6 L105.2 126.0 L98.0 134.5 M184.5 1.2 L169.4 18.5 L153.2 38.1 L144.0 47.4 M251.5 1.2 L288.0 24.3 M288.0 24.3 L311.1 43.9 L334.2 62.4 L345.8 74.0 L350.4 82.1 M98.0 133.5 L76.3 157.1 L62.4 171.0 L53.2 183.7 L46.2 203.3 L42.8 226.5 L40.5 249.6 L37.0 268.5 M37.0 269.2 L32.4 281.9 L23.1 300.4 L11.6 318.9 L0.0 333.9 M144.0 448.5 L122.5 476.3 L101.7 501.7 L87.8 520.2 L76.3 534.1" fill="none" stroke="#f5e3ca" stroke-width="3.1" stroke-opacity="1" stroke-linejoin="round" stroke-linecap="round"/>
<path d="M144.0 46.2 L138.7 52.7 L126.0 68.9 L117.9 83.2 L114.4 97.1 L109.8 115.6 L105.2 126.0 L98.0 134.5 M184.5 1.2 L169.4 18.5 L153.2 38.1 L144.0 47.4 M251.5 1.2 L288.0 24.3 M288.0 24.3 L311.1 43.9 L334.2 62.4 L345.8 74.0 L350.4 82.1 M98.0 133.5 L76.3 157.1 L62.4 171.0 L53.2 183.7 L46.2 203.3 L42.8 226.5 L40.5 249.6 L37.0 268.5 M37.0 269.2 L32.4 281.9 L23.1 300.4 L11.6 318.9 L0.0 333.9 M144.0 448.5 L122.5 476.3 L101.7 501.7 L87.8 520.2 L76.3 534.1" fill="none" stroke="#9a8f80" stroke-width="0.6" stroke-linejoin="round"/>
<path d="M410.5 1.2 L394.3 20.8 L380.5 38.1 L366.6 54.3 L355.0 68.2 L351.6 78.6 L351.6 97.1 L352.7 134.1 M352.7 135.2 L353.9 157.1 L351.6 175.6 L345.8 189.5 L336.5 203.3 L327.3 217.2 L318.1 231.1 L297.2 251.9 L288.0 263.4 M282.7 274.9 L259.6 300.4 L234.2 330.4 L211.0 360.5 L190.2 385.9 L178.7 402.1 M181.0 401.2 L167.1 416.2 L144.0 446.2" fill="none" stroke="#f5e3ca" stroke-width="3.6" stroke-opacity="1" stroke-linejoin="round" stroke-linecap="round"/>
<path d="M410.5 1.2 L394.3 20.8 L380.5 38.1 L366.6 54.3 L355.0 68.2 L351.6 78.6 L351.6 97.1 L352.7 134.1 M352.7 135.2 L353.9 157.1 L351.6 175.6 L345.8 189.5 L336.5 203.3 L327.3 217.2 L318.1 231.1 L297.2 251.9 L288.0 263.4 M282.7 274.9 L259.6 300.4 L234.2 330.4 L211.0 360.5 L190.2 385.9 L178.7 402.1 M181.0 401.2 L167.1 416.2 L144.0 446.2" fill="none" stroke="#9a8f80" stroke-width="0.6" stroke-linejoin="round"/>
</g>
<clipPath id="cz0"><rect x="191.0" y="80.0" width="140.0" height="110.1"/></clipPath>
<g clip-path="url(#cz0)">
<path d="M191.0 87.6 L210.0 106.6 L221.4 117.0 M247.9 146.4 L256.5 154.0 L266.9 163.5 L280.2 177.7 L289.7 188.2 M257.4 118.0 L272.6 131.2 L291.6 150.2 L308.6 166.3 L331.0 188.2 M284.0 120.8 L292.5 127.4 L304.9 134.1 L312.4 140.7 L321.9 150.2 L331.0 159.7 M315.3 120.8 L304.9 134.1 L291.6 150.2 L274.5 170.1 L258.4 190.1 M295.4 106.6 L284.0 118.0 L272.6 131.2 L262.2 137.9 L256.5 145.5 L255.5 148.3 M210.0 106.6 L221.4 91.8 L231.8 90.4 L241.3 100.9 M216.6 98.0 L229.0 111.3 M234.6 94.2 L224.2 106.6 M191.0 117.0 L193.8 117.0 L202.4 126.5 L194.8 135.0 L200.5 143.6 L207.1 146.4 M202.4 126.5 L209.0 122.1 M191.0 135.0 L194.8 135.0 M207.1 159.7 L215.7 163.5 L229.0 165.4 L238.4 162.5 L247.9 155.0 L256.5 145.5 M207.1 159.7 L211.9 169.2 L215.7 180.6 L219.5 190.1 M191.0 178.7 L196.7 174.9 L207.1 167.3 M256.5 154.0 L266.9 158.7 L266.0 163.5 L257.4 169.2 L247.9 173.0 L241.3 180.6 L236.5 190.1 M244.1 178.7 L253.6 183.4 L258.4 190.1 M331.0 131.2 L323.8 133.1 L321.9 150.2 L315.3 159.7 L308.6 166.3 M321.9 138.8 L331.0 139.8 M308.6 166.3 L323.8 178.7 L331.0 189.1 M293.5 80.9 L295.4 85.7 L299.2 83.8 L303.0 87.6 L304.9 91.4 L299.2 97.1 L300.1 108.5 L304.9 113.2 L310.5 112.3 M304.9 91.4 L312.4 95.2 L316.2 99.0 M284.0 120.8 L291.6 129.3 L285.9 136.9 L284.0 140.7" fill="none" stroke="#e6d4bc" stroke-width="1.35" stroke-opacity="1" stroke-linejoin="round" stroke-linecap="round"/>
<path d="M253.6 87.6 L240.3 103.7 L231.8 115.1 M207.1 146.4 L198.6 155.9 L191.0 164.4" fill="none" stroke="#f1dfc6" stroke-width="1.8" stroke-opacity="1" stroke-linejoin="round" stroke-linecap="round"/>
</g>
<clipPath id="cz1"><rect x="331.0" y="80.0" width="140.0" height="110.1"/></clipPath>
<g clip-path="url(#cz1)">
<path d="M347.1 80.9 L348.6 99.0 L350.5 127.4 L351.5 155.9 L349.6 174.9 L342.4 190.1 M355.7 80.9 L356.6 95.2 L357.2 127.4 M436.3 99.0 L422.1 113.2 L406.9 130.3 L402.2 140.7 L394.6 155.0 L389.8 159.7 M418.3 80.9 L427.8 89.5 L436.3 99.0 L471.0 133.1 M409.7 117.0 L415.4 122.7 L423.0 134.1 L454.3 167.3 M471.0 152.1 L454.3 167.3 L437.3 190.1 M440.1 152.1 L436.3 157.8 L425.9 154.0 L418.3 155.9 L412.6 161.6 M355.7 80.9 L374.6 99.0 L379.4 96.1 L384.1 83.8 L385.1 80.9 M350.0 97.1 L363.3 96.1 L370.8 102.8 L376.5 106.6 L387.9 108.1 M353.8 104.7 L365.2 104.7 L374.6 99.0 M408.8 80.9 L413.5 85.7 L412.6 91.4 L406.9 99.0 M331.0 140.7 L334.8 146.4 L339.5 152.1 L334.8 163.5 L331.0 167.3 M355.7 161.6 L365.2 172.0 L359.5 178.7 L350.0 186.3 M342.4 190.1 L350.0 180.6 L364.2 173.0 M367.1 188.2 L379.4 179.6 M422.1 182.5 L429.7 190.1" fill="none" stroke="#e6d4bc" stroke-width="1.35" stroke-opacity="1" stroke-linejoin="round" stroke-linecap="round"/>
<path d="M435.4 80.9 L427.8 89.5 L414.5 106.6 L403.1 120.8 L393.6 127.4 L387.9 135.0 L365.2 169.2 L350.0 186.3 L346.2 190.1" fill="none" stroke="#f1dfc6" stroke-width="1.8" stroke-opacity="1" stroke-linejoin="round" stroke-linecap="round"/>
<path d="M350.0 80.9 L351.9 99.0 L353.8 127.4 L354.7 155.9 L352.8 174.9 L348.1 190.1" fill="none" stroke="#f5e3ca" stroke-width="3.6" stroke-opacity="1" stroke-linejoin="round" stroke-linecap="round"/>
<path d="M350.0 80.9 L351.9 99.0 L353.8 127.4 L354.7 155.9 L352.8 174.9 L348.1 190.1" fill="none" stroke="#9a8f80" stroke-width="0.6" stroke-linejoin="round"/>
</g>
<clipPath id="cz2"><rect x="191.0" y="190.0" width="140.0" height="110.1"/></clipPath>
<g clip-path="url(#cz2)">
<path d="M191.0 240.3 L196.7 239.7 L202.4 246.9 L210.0 250.7 L214.7 245.0 L215.7 238.4 L221.4 235.5 L227.1 243.1 L232.7 249.8 L241.3 250.7 L246.0 246.0 L251.7 250.7 L255.5 259.3 L261.2 262.1 L267.9 255.5 L293.5 256.4 L299.2 260.2 L304.9 265.9 L308.6 268.7" fill="none" stroke="#1c2d19" stroke-width="1.25" stroke-opacity="1" stroke-linejoin="round" stroke-linecap="round"/>
<path d="M272.6 277.3 L282.1 279.2 L281.1 284.9 L274.5 284.9 L272.6 277.3" fill="none" stroke="#e6d5bd" stroke-width="0.9" stroke-opacity="0.8" stroke-linejoin="round" stroke-linecap="round"/>
<path d="M234.6 190.9 L247.0 204.2 L268.8 225.1 L297.3 252.6 L308.6 265.9 M191.0 256.4 L199.5 263.1 L210.0 273.5 L219.5 279.2 L225.2 278.8 L247.9 269.7 L263.1 265.9 L266.9 267.8 M266.9 267.8 L263.1 273.5 L261.2 279.2 L266.9 286.8 L274.5 292.5 L282.1 300.1 M280.2 275.4 L293.5 288.7 L304.9 300.1 M297.3 254.5 L306.7 265.9 L312.4 273.5 M293.5 265.0 L295.4 271.6 L289.7 279.2 L280.2 292.5 L274.5 300.1 M323.8 262.1 L316.2 271.6 L304.9 288.7 L297.3 300.1 M191.0 196.6 L197.6 196.6 L199.5 203.3 L194.8 210.9 L191.0 207.1 M199.5 203.3 L205.2 209.0 L194.8 220.4 L191.0 218.5 M205.2 209.0 L226.1 209.9 L230.8 201.4 L235.6 190.9 M219.5 190.9 L215.7 201.4 L214.7 214.7 L217.6 222.3 M219.5 190.9 L232.7 196.6 L247.0 204.2 M213.8 223.2 L222.3 227.0 M191.0 283.0 L200.5 286.8 L211.9 290.6 L219.5 300.1 M191.0 293.4 L194.8 288.7 L196.7 284.9 M232.7 300.1 L238.4 297.2 L244.1 300.1" fill="none" stroke="#e6d4bc" stroke-width="1.35" stroke-opacity="1" stroke-linejoin="round" stroke-linecap="round"/>
<path d="M258.4 190.9 L247.0 204.2 L225.2 225.1 L219.5 239.3 L211.9 250.7 L198.6 263.1 L191.0 273.5 M191.0 225.1 L200.5 224.2 L213.8 223.2 L225.2 225.1" fill="none" stroke="#f1dfc6" stroke-width="1.8" stroke-opacity="1" stroke-linejoin="round" stroke-linecap="round"/>
<path d="M331.0 214.7 L314.3 233.6 L297.3 254.5 L280.2 275.4 L261.2 300.1" fill="none" stroke="#f5e3ca" stroke-width="3.6" stroke-opacity="1" stroke-linejoin="round" stroke-linecap="round"/>
<path d="M331.0 214.7 L314.3 233.6 L297.3 254.5 L280.2 275.4 L261.2 300.1" fill="none" stroke="#9a8f80" stroke-width="0.6" stroke-linejoin="round"/>
</g>
<clipPath id="cz3"><rect x="121.0" y="300.0" width="140.0" height="110.1"/></clipPath>
<g clip-path="url(#cz3)">
<path d="M231.1 370.2 L242.4 369.3 L253.8 372.1 L261.0 371.7 M121.0 403.4 L128.6 399.6 L136.2 402.5 L143.8 401.5" fill="none" stroke="#1c2d19" stroke-width="1.25" stroke-opacity="1" stroke-linejoin="round" stroke-linecap="round"/>
<path d="M202.6 355.0 L204.5 352.2 L214.0 355.0 L219.7 368.3 L215.9 371.2 L206.4 366.4 L202.6 355.0" fill="none" stroke="#e6d5bd" stroke-width="0.9" stroke-opacity="0.8" stroke-linejoin="round" stroke-linecap="round"/>
<path d="M257.6 300.9 L233.0 328.5 M146.6 300.9 L172.2 324.7 L202.6 355.0 L210.2 362.6 L219.7 372.1 L231.1 383.5 L244.3 396.8 L257.6 410.1 M170.3 300.9 L159.0 313.3 L143.8 333.2 L121.0 362.6 M142.8 300.9 L135.2 310.4 L121.0 328.5 M121.0 302.8 L130.5 303.8 L136.2 309.5 L156.1 324.7 L159.9 330.4 L169.4 331.3 M152.3 337.0 L159.9 332.3 L169.4 331.3 L177.0 339.8 L176.0 347.4 L171.3 352.2 L163.7 349.3 L155.2 344.6 L152.3 337.0 M172.2 324.7 L169.4 331.3 M172.2 324.7 L183.6 317.1 L209.2 333.2 M143.8 333.2 L151.4 338.0 L152.3 337.0 M177.0 339.8 L183.6 344.6 L187.4 348.4 L193.1 344.6 L204.5 340.8 L209.2 333.2 L223.5 320.9 L229.2 313.3 L226.3 303.8 L219.7 300.9 M183.6 317.1 L181.7 307.6 L188.4 300.9 M121.0 349.3 L126.7 353.1 M261.0 314.2 L251.9 326.6 L238.6 330.4 L233.0 328.5 M243.4 299.4 L251.9 307.6 L261.0 315.2 M226.7 303.8 L233.3 299.4 M261.0 343.6 L244.3 364.5 L227.3 387.3 L220.6 398.7 L219.7 410.1 M261.0 375.9 L244.3 396.8 L233.0 410.1 M219.7 372.1 L209.2 383.5 L192.2 406.3 M198.8 378.7 L209.2 383.5 M183.6 391.1 L186.5 387.3 L189.3 386.3" fill="none" stroke="#e6d4bc" stroke-width="1.35" stroke-opacity="1" stroke-linejoin="round" stroke-linecap="round"/>
<path d="M121.0 371.2 L149.5 398.7" fill="none" stroke="#f1dfc6" stroke-width="1.8" stroke-opacity="1" stroke-linejoin="round" stroke-linecap="round"/>
<path d="M261.0 301.9 L234.9 332.3 L210.2 362.6 L189.3 387.3 L172.2 410.1" fill="none" stroke="#f5e3ca" stroke-width="3.6" stroke-opacity="1" stroke-linejoin="round" stroke-linecap="round"/>
<path d="M261.0 301.9 L234.9 332.3 L210.2 362.6 L189.3 387.3 L172.2 410.1" fill="none" stroke="#9a8f80" stroke-width="0.6" stroke-linejoin="round"/>
</g>
<clipPath id="cz4"><rect x="261.0" y="300.0" width="140.0" height="110.1"/></clipPath>
<g clip-path="url(#cz4)">
<path d="M261.0 374.0 L270.5 373.1 L276.2 376.9 L283.8 374.0 L299.0 376.9 L306.5 383.5 L316.0 389.2" fill="none" stroke="#1c2d19" stroke-width="1.25" stroke-opacity="1" stroke-linejoin="round" stroke-linecap="round"/>
<path d="M261.0 314.2 L272.4 327.5 L287.6 344.6 L306.5 359.8 M297.1 303.8 L308.4 314.2 L325.5 331.3 M306.5 359.8 L285.7 383.5 L264.8 410.1 M296.1 300.9 L281.9 314.2 L272.4 327.5 L261.0 341.7 M311.3 312.3 L297.1 320.9 L282.8 336.1 M287.6 344.6 L278.1 352.2 L261.0 374.0 M268.6 300.9 L261.0 311.4 M323.6 321.8 L312.2 334.2 L306.5 343.6 L304.6 356.9" fill="none" stroke="#e6d4bc" stroke-width="1.35" stroke-opacity="1" stroke-linejoin="round" stroke-linecap="round"/>
<path d="M334.1 323.7 L325.5 334.2 L316.0 347.4 L306.5 359.8 L309.4 375.9 L304.6 387.3 L301.8 398.7 L301.8 410.1" fill="none" stroke="#f1dfc6" stroke-width="1.8" stroke-opacity="1" stroke-linejoin="round" stroke-linecap="round"/>
</g>
<clipPath id="cz5"><rect x="121.0" y="410.0" width="140.0" height="110.1"/></clipPath>
<g clip-path="url(#cz5)">
<path d="M166.5 421.4 L170.3 428.0 L165.6 433.7 L176.0 440.4 L181.7 448.0 L186.5 450.8 L184.6 458.4 L191.2 461.2 L200.7 459.3 L206.4 461.2 L210.2 466.9 L215.9 470.7" fill="none" stroke="#1c2d19" stroke-width="1.25" stroke-opacity="1" stroke-linejoin="round" stroke-linecap="round"/>
<path d="M168.4 412.8 L175.1 410.9 L177.0 416.6 L171.3 420.4 L168.4 412.8" fill="none" stroke="#e6d5bd" stroke-width="0.9" stroke-opacity="0.8" stroke-linejoin="round" stroke-linecap="round"/>
<path d="M217.8 410.9 L193.1 443.2 M233.0 410.9 L224.4 421.4 M214.9 444.2 L223.5 456.5 L218.7 465.0 M261.0 417.6 L223.5 456.5 L209.2 482.1 L183.6 513.4 L177.9 520.1 M261.0 430.9 L251.9 438.5 L242.4 453.6 L236.7 461.2 M257.6 410.9 L261.0 413.8 M185.5 410.9 L188.4 417.6 L179.8 429.0 M208.3 482.1 L234.9 493.5 M121.0 470.7 L126.7 466.9 L135.2 467.9 L141.9 473.6 L135.2 485.0 L128.6 479.3 L121.0 470.7 M135.2 485.0 L145.7 491.6 L155.2 503.0 L162.7 506.8 L177.9 508.7 L185.5 513.4 L193.1 520.1 M162.7 506.8 L163.7 514.4 L168.4 520.1 M121.0 483.1 L128.6 489.7 L135.2 485.0 M135.2 485.0 L121.0 503.9" fill="none" stroke="#e6d4bc" stroke-width="1.35" stroke-opacity="1" stroke-linejoin="round" stroke-linecap="round"/>
<path d="M166.5 418.5 L177.9 429.0 L193.1 443.2 L210.2 458.4 L219.7 465.0 L229.2 467.9 M261.0 457.4 L253.8 466.0 L238.6 487.8 L233.0 501.1 L232.0 520.1 M153.3 461.2 L135.2 485.0" fill="none" stroke="#f1dfc6" stroke-width="1.8" stroke-opacity="1" stroke-linejoin="round" stroke-linecap="round"/>
<path d="M173.2 410.9 L166.5 418.5 L143.8 446.1 L121.0 473.6" fill="none" stroke="#f5e3ca" stroke-width="3.6" stroke-opacity="1" stroke-linejoin="round" stroke-linecap="round"/>
<path d="M173.2 410.9 L166.5 418.5 L143.8 446.1 L121.0 473.6" fill="none" stroke="#9a8f80" stroke-width="0.6" stroke-linejoin="round"/>
</g>
<g font-family="Liberation Sans, sans-serif"><text x="433.3" y="39" font-size="12.5" fill="#a9b3b9" textLength="76.3" lengthAdjust="spacing">CLARKSON</text><text x="338.4" y="280.7" font-size="16" fill="#c4d2df" textLength="64" lengthAdjust="spacingAndGlyphs">Oakville</text><text x="-12.5" y="442" font-size="12.5" fill="#b4bdc3" textLength="66.5" lengthAdjust="spacing">ORCHARD</text><text x="218" y="479.6" font-size="12.5" fill="#c2cbd1" textLength="57.8" lengthAdjust="spacing">BRONTE</text></g><circle cx="245.4" cy="118.1" r="11.6" fill="#ee9b5f"/><circle cx="309.6" cy="255.3" r="11.6" fill="#ee9b5f"/><circle cx="271.9" cy="94.9" r="20.6" fill="#d35405"/><circle cx="330.5" cy="108.8" r="20.6" fill="#d35405"/><circle cx="229.1" cy="135.8" r="20.6" fill="#d35405"/><circle cx="400.3" cy="177.7" r="20.6" fill="#d35405"/><circle cx="296.1" cy="192.6" r="20.6" fill="#d35405"/><circle cx="305.0" cy="222.8" r="20.6" fill="#d35405"/><circle cx="325.9" cy="246.0" r="20.6" fill="#d35405"/><circle cx="342.2" cy="236.7" r="20.6" fill="#d35405"/><circle cx="398.9" cy="108.8" r="11.6" fill="#ee9b5f"/><circle cx="152.0" cy="175.0" r="14.9" fill="#e58043"/><circle cx="276.1" cy="208.8" r="14.9" fill="#e58043"/><circle cx="351.5" cy="255.3" r="14.9" fill="#e58043"/><circle cx="278.4" cy="262.3" r="11.6" fill="#ee9b5f"/><circle cx="375.7" cy="268.4" r="11.6" fill="#ee9b5f"/><circle cx="317.5" cy="279.5" r="11.6" fill="#ee9b5f"/><circle cx="363.1" cy="292.6" r="14.9" fill="#e58043"/><circle cx="323.6" cy="299.5" r="14.9" fill="#e58043"/><circle cx="342.2" cy="309.8" r="12" fill="#ee9b5f"/><circle cx="104.5" cy="330.4" r="14.9" fill="#e58043"/><circle cx="157.0" cy="406.0" r="11.6" fill="#ee9b5f"/><circle cx="221.0" cy="429.0" r="14.9" fill="#e58043"/><circle cx="241.0" cy="474.0" r="14.9" fill="#e58043"/><circle cx="156.7" cy="272.2" r="2.6" fill="#f9dcaa"/><circle cx="172.4" cy="324.6" r="2.6" fill="#f9dcaa"/><circle cx="190.2" cy="356.3" r="2.6" fill="#f9dcaa"/><circle cx="311.0" cy="274.0" r="2.6" fill="#f9dcaa"/>
</svg>
<!--/MAPSVG-->
<!--MAPUI-->
<div class="abs" style="left:0;top:534.5px;width:575px;height:6px;background:#1f1f1f"></div>
<div class="abs" style="left:527px;top:15px;width:36px;height:35px;border-radius:4px;background:#fff;box-shadow:0 0 4px rgba(0,0,0,.25)">
 <svg width="36" height="35" viewBox="0 0 36 35"><circle cx="15.4" cy="15.2" r="5.4" fill="none" stroke="#14243a" stroke-width="2.3"/><path d="M19.6 19.6 L25.4 25.6" stroke="#14243a" stroke-width="2.6" stroke-linecap="round"/></svg>
</div>
<div class="abs" style="left:527px;top:64px;width:36px;height:104px;border-radius:4px;background:#fff;box-shadow:0 0 4px rgba(0,0,0,.25)">
 <div class="hl" style="left:0;top:34px;width:36px;background:#e3e6e8"></div>
 <div class="hl" style="left:0;top:69px;width:36px;background:#e3e6e8"></div>
 <svg width="36" height="104" viewBox="0 0 36 104"><path d="M13.6 17.4 H22.4 M18 13 V21.8" stroke="#1a1a1a" stroke-width="2" /><path d="M13.8 51.8 H22.2" stroke="#1a1a1a" stroke-width="2.2"/><path d="M18.4 81.4 L21.6 87.4 H15.2 Z" fill="#222"/><path d="M18.4 95 L21.6 89.2 H15.2 Z" fill="#c2c2c2"/></svg>
</div>
<div class="abs" style="left:512.7px;top:470.5px;width:50px;height:50px;border-radius:50%;background:#4264fb;box-shadow:0 0 8px rgba(0,0,0,.35)">
 <svg width="50" height="50" viewBox="-1 -1 50 50"><path d="M24 14.6 Q25.2 14.6 25.2 15.9 Q29.6 17 29.6 22.4 V27 L31.6 29.4 V30.4 H16.4 V29.4 L18.4 27 V22.4 Q18.4 17 22.8 15.9 Q22.8 14.6 24 14.6 Z" fill="#fff"/><path d="M21.8 31.6 H26.2 Q26 33.6 24 33.6 Q22 33.6 21.8 31.6 Z" fill="#fff"/></svg>
</div>
<div class="abs" style="left:544.1px;top:463.5px;width:21.8px;height:21.8px;border-radius:50%;background:#ee3f9f"></div>
<div class="t b" id="t-badge" style="left:551.4px;top:468px;font-size:13px;color:#fff">3</div>
<!--/MAPUI-->
</div>
</body>
</html>
